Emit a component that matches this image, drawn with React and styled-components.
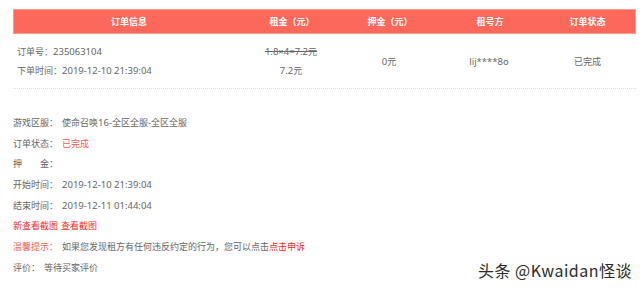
import React from "react"
import styled, { createGlobalStyle } from "styled-components"

const Global = createGlobalStyle`
  body {
    margin: 0;
    background: #fff;
    font-family: "Noto Sans CJK SC", "Noto Sans", sans-serif;
  }
`

const Page = styled.div`
  position: relative;
  width: 640px;
  height: 288px;
  overflow: hidden;
  padding: 9px 4px 0px 13px;
  box-sizing: border-box;
  color: #666;
  font-size: 9px;
`

const Grid = styled.div`
  display: grid;
  grid-template-columns: 230px 96px 100px 100px 1fr;
`

const Head = styled(Grid)`
  height: 25px;
  background: #fc685a;
  border: 1px solid #fd9a90;
  box-sizing: border-box;
  color: #fff;
  font-weight: bold;
  align-items: center;
  text-align: center;
`

const Row = styled(Grid)`
  height: 55px;
  border-bottom: 1px dotted #ddd;
  box-sizing: border-box;
  align-items: center;
  line-height: 19px;
`

const Cell = styled.div`
  text-align: ${({ left }) => (left ? "left" : "center")};
  padding-left: ${({ left }) => (left ? "4px" : "0px")};
`

const Num = styled.span`
  font-family: "Noto Sans", sans-serif;
  font-size: 9.5px;
`

const Strike = styled.div`
  text-decoration: line-through;
`

const Details = styled.div`
  padding-top: 23px;
`

const Line = styled.div`
  display: flex;
  height: 20.7px;
  align-items: center;
`

const Label = styled.span`
  color: ${({ tone }) => (tone === "warn" ? "#f5645a" : "#666")};
  margin-right: 4px;
`

const Red = styled.span`
  color: ${({ soft }) => (soft ? "#f25a5a" : "#f32a2a")};
  margin-right: ${({ gap }) => (gap ? "3px" : "0px")};
`

const Mark = styled.div`
  position: absolute;
  right: 8px;
  bottom: 6px;
  font-size: 16px;
  letter-spacing: 0.5px;
  color: #2b2b2b;
  text-shadow: 0 0 2px #fff, 0 0 2px #fff;
`

export default () => (
  <Page>
    <Global />
    <Head>
      <div>订单信息</div>
      <div>租金（元）</div>
      <div>押金（元）</div>
      <div>租号方</div>
      <div>订单状态</div>
    </Head>
    <Row>
      <Cell left>
        <div>
          订单号：<Num>235063104</Num>
        </div>
        <div>
          下单时间：<Num>2019-12-10 21:39:04</Num>
        </div>
      </Cell>
      <Cell>
        <Strike>
          <Num>1.8×4=7.2</Num>元
        </Strike>
        <div>
          <Num>7.2</Num>元
        </div>
      </Cell>
      <Cell>
        <Num>0</Num>元
      </Cell>
      <Cell>
        <Num>lij****8o</Num>
      </Cell>
      <Cell>已完成</Cell>
    </Row>
    <Details>
      <Line>
        <Label>游戏区服：</Label>使命召唤<Num>16-</Num>全区全服<Num>-</Num>全区全服
      </Line>
      <Line>
        <Label>订单状态：</Label>
        <Red soft>已完成</Red>
      </Line>
      <Line>
        <Label>押　　金：</Label>
      </Line>
      <Line>
        <Label>开始时间：</Label>
        <Num>2019-12-10 21:39:04</Num>
      </Line>
      <Line>
        <Label>结束时间：</Label>
        <Num>2019-12-11 01:44:04</Num>
      </Line>
      <Line>
        <Red gap>新查看截图</Red>
        <Red>查看截图</Red>
      </Line>
      <Line>
        <Label tone="warn">温馨提示：</Label>
        如果您发现租方有任何违反约定的行为，您可以点击<Red>点击申诉</Red>
      </Line>
      <Line>
        <Label>评价：</Label>等待买家评价
      </Line>
    </Details>
    <Mark>头条 @Kwaidan怪谈</Mark>
  </Page>
)
